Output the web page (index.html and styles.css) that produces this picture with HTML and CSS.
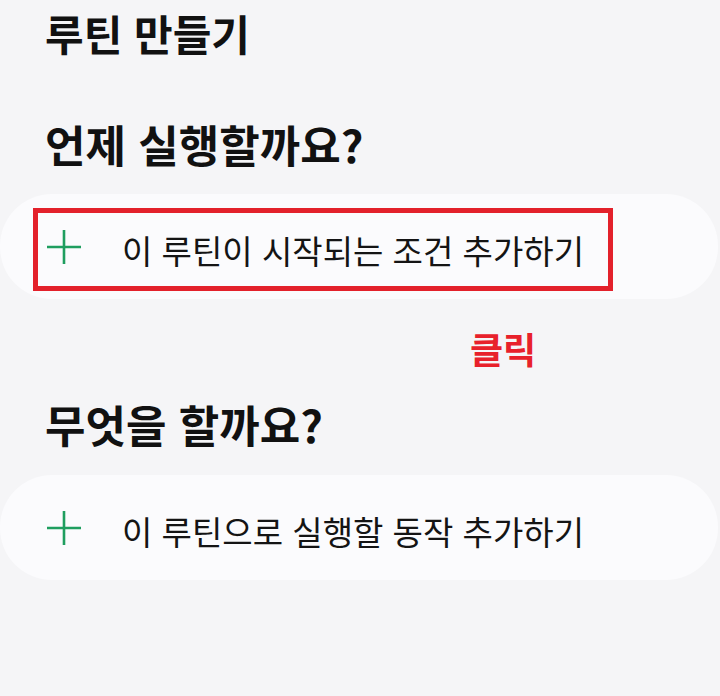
FILE: index.html
```html
<!DOCTYPE html>
<html lang="ko">
<head>
<meta charset="utf-8">
<link rel="stylesheet" href="styles.css">
</head>
<body>
<main class="page">
  <h1 class="title">루틴 만들기</h1>
  <h2 class="section-title first">언제 실행할까요?</h2>
  <div class="card">
    <div class="row highlighted">
      <svg class="plus" viewBox="0 0 34 34" width="34" height="34"><path d="M17 0V34M0 17H34" stroke="#1f9e5f" stroke-width="2.6" fill="none"/></svg>
      <span class="row-text">이 루틴이 시작되는 조건 추가하기</span>
    </div>
  </div>
  <div class="click-note">클릭</div>
  <h2 class="section-title second">무엇을 할까요?</h2>
  <div class="card">
    <div class="row">
      <svg class="plus" viewBox="0 0 34 34" width="34" height="34"><path d="M17 0V34M0 17H34" stroke="#1f9e5f" stroke-width="2.6" fill="none"/></svg>
      <span class="row-text">이 루틴으로 실행할 동작 추가하기</span>
    </div>
  </div>
</main>
</body>
</html>
```
FILE: styles.css
```css
html, body {
  margin: 0;
  padding: 0;
  background: #f5f5f7;
}
body {
  width: 720px;
  height: 696px;
  overflow: hidden;
  font-family: "Noto Sans CJK KR", "Noto Sans", sans-serif;
  color: #111;
}
.page {
  display: flex;
  flex-direction: column;
}
.title {
  margin: 0;
  padding: 5px 0 0 45px;
  font-size: 42px;
  font-weight: 700;
  line-height: 56px;
}
.section-title {
  margin: 0;
  padding-left: 45px;
  font-size: 44px;
  font-weight: 700;
  line-height: 56px;
}
.section-title.first {
  margin-top: 55px;
  margin-bottom: 22px;
}
.section-title.second {
  margin-bottom: 23px;
}
.card {
  width: 718px;
  height: 105px;
  border-radius: 52px;
  background: #fbfbfd;
  display: flex;
  align-items: center;
  box-sizing: border-box;
  padding: 6px 0 0 33px;
}
.row {
  display: flex;
  align-items: center;
  height: 83px;
  box-sizing: border-box;
  border: 5px solid transparent;
  padding: 0 24px 0 9px;
  gap: 41px;
}
.row.highlighted {
  border-color: #e3212b;
}
.plus {
  flex: none;
  display: block;
  margin-bottom: 6px;
}
.row-text {
  font-size: 33px;
  font-weight: 400;
  line-height: 40px;
  color: #141414;
}
.click-note {
  margin: 27px 0 26px 470px;
  font-size: 36px;
  font-weight: 700;
  line-height: 44px;
  color: #e8212b;
}
```
